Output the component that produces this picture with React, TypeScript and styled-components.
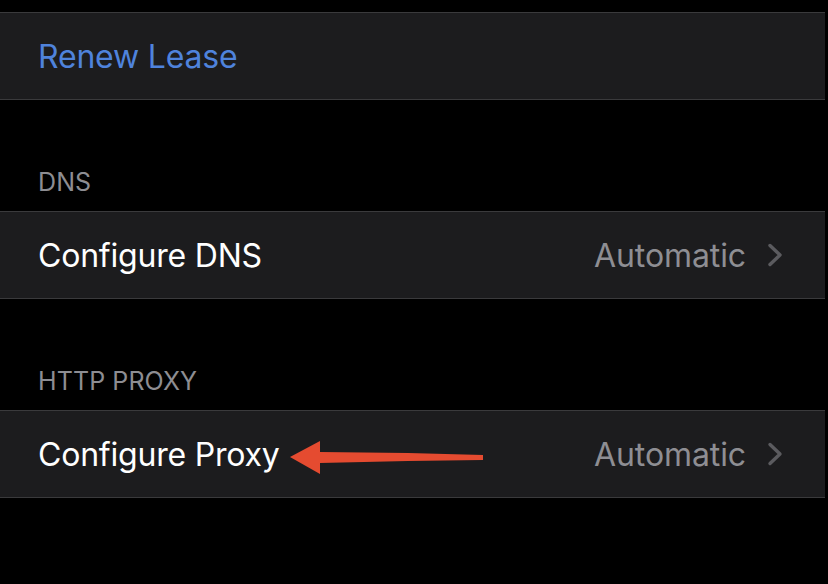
import React from "react";
import styled, { createGlobalStyle } from "styled-components";

const Global = createGlobalStyle`
  html, body { margin: 0; padding: 0; background: #000; }
  body { font-family: Inter, "Noto Sans", "Liberation Sans", sans-serif; -webkit-font-smoothing: antialiased; }
`;

const Page = styled.div`
  width: 828px;
  height: 584px;
  background: #000;
  padding-top: 12px;
  box-sizing: border-box;
  overflow: hidden;
  display: flex;
  flex-direction: column;
`;

const Group = styled.div`
  position: relative;
  width: 825px;
  background: #1c1c1e;
  border-top: 1px solid #3a3a3c;
  border-bottom: 1px solid #3a3a3c;
`;

const Row = styled.div`
  height: 86px;
  display: flex;
  align-items: center;
  justify-content: space-between;
  padding: 0 41px 0 38px;
`;

const Label = styled.span<{ $blue?: boolean }>`
  font-size: 32px;
  letter-spacing: -0.2px;
  color: ${(p) => (p.$blue ? "#4f83dc" : "#ffffff")};
`;

const Value = styled.span`
  display: flex;
  align-items: center;
  gap: 21px;
  font-size: 32px;
  letter-spacing: -0.1px;
  color: #8e8e93;
`;

const Header = styled.div`
  height: 111px;
  display: flex;
  align-items: flex-end;
  padding: 0 0 16px 38px;
  box-sizing: border-box;
  font-size: 25px;
  line-height: 1;
  color: #8d8d92;
  letter-spacing: 0.1px;
`;

const Arrow = styled.svg`
  position: absolute;
  left: 288px;
  top: 29px;
`;

const Chevron = () => (
  <svg width="17" height="24" viewBox="0 0 17 24">
    <path d="M3 2.5 L13 12 L3 21.5" fill="none" stroke="#5b5b5f" strokeWidth="3.4" strokeLinecap="round" strokeLinejoin="round" />
  </svg>
);

export default function App() {
  return (
    <>
      <Global />
      <Page>
        <Group>
          <Row>
            <Label $blue>Renew Lease</Label>
          </Row>
        </Group>
        <Header>DNS</Header>
        <Group>
          <Row>
            <Label>Configure DNS</Label>
            <Value>
              Automatic
              <Chevron />
            </Value>
          </Row>
        </Group>
        <Header>HTTP PROXY</Header>
        <Group>
          <Row>
            <Label>Configure Proxy</Label>
            <Value>
              Automatic
              <Chevron />
            </Value>
          </Row>
          <Arrow width="200" height="36" viewBox="0 0 200 36">
            <path
              d="M2 17 L32 1 L32 12 L120 13 L195 15 L195 20 L120 21 L32 23 L32 34 Z"
              fill="#e54b30"
            />
          </Arrow>
        </Group>
      </Page>
    </>
  );
}
